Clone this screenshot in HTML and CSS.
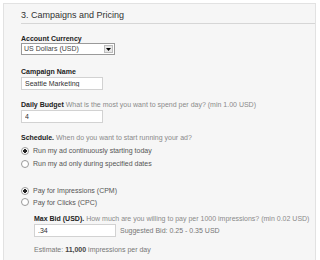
FILE: index.html
```
<!DOCTYPE html>
<html lang="en">
<head>
    <meta charset="UTF-8">
    <title>Campaigns and Pricing</title>
    <link rel="stylesheet" href="styles.css">
</head>
<body>
    <div class="panel">
        <h2 class="title">3. Campaigns and Pricing</h2>

        <div class="field first">
            <div class="label">Account Currency</div>
            <div class="select">
                <span class="select-text">US Dollars (USD)</span>
                <span class="select-btn">
                    <svg width="5" height="3" viewBox="0 0 5 3"><path d="M0 0H5L2.5 3Z" fill="#000"/></svg>
                </span>
            </div>
        </div>

        <div class="field gap-big">
            <div class="label">Campaign Name</div>
            <input class="text" type="text" value="Seattle Marketing">
        </div>

        <div class="field">
            <div class="label">Daily Budget <span class="help">What is the most you want to spend per day? (min 1.00 USD)</span></div>
            <input class="text" type="text" value="4">
        </div>

        <div class="field">
            <div class="label">Schedule. <span class="help">When do you want to start running your ad?</span></div>
            <div class="radios">
                <label class="radio"><input type="radio" name="sched" checked> Run my ad continuously starting today</label>
                <label class="radio"><input type="radio" name="sched"> Run my ad only during specified dates</label>
            </div>
        </div>

        <div class="radios pricing">
            <label class="radio tight"><input type="radio" name="pay" checked> Pay for Impressions (CPM)</label>
            <label class="radio tight"><input type="radio" name="pay"> Pay for Clicks (CPC)</label>
        </div>

        <div class="bid">
            <div class="label">Max Bid (USD). <span class="help">How much are you willing to pay per 1000 impressions? (min 0.02 USD)</span></div>
            <div class="bid-row">
                <input class="text" type="text" value=".34">
                <span class="suggest">Suggested Bid: 0.25 - 0.35 USD</span>
            </div>
            <div class="estimate">Estimate: <b>11,000</b> impressions per day</div>
        </div>
    </div>
</body>
</html>
```
FILE: styles.css
```
body {
    margin: 0;
    background: #fff;
    font-family: "Liberation Sans", Arial, sans-serif;
    font-size: 7px;
    color: #555;
}
.panel {
    margin: 3px 4px 0 3px;
    height: 257px;
    box-sizing: border-box;
    border: 1px solid #e2e2e2;
    border-bottom: none;
    background: #f6f6f6;
    padding-left: 17px;
}
.title {
    margin: 6px 0 0 0;
    padding-bottom: 2px;
    font-size: 9px;
    line-height: 11px;
    font-weight: normal;
    color: #333;
    border-bottom: 1px solid #d6d6d6;
}
.field {
    margin-top: 10px;
}
.field.gap-big {
    margin-top: 12px;
}
.label {
    font-weight: bold;
    line-height: 9px;
    color: #222;
}
.help {
    font-weight: normal;
    color: #8a8a8a;
}
.select {
    display: flex;
    width: 94px;
    height: 12px;
    box-sizing: border-box;
    border: 1px solid #9a9a9a;
    background: #fff;
}
.select-text {
    flex: 1;
    line-height: 10px;
    padding-left: 2px;
    color: #444;
}
.select-btn {
    width: 9px;
    margin: 1px;
    background: #e8e8e8;
    border: 1px solid #bdbdbd;
    box-sizing: border-box;
    display: flex;
    align-items: center;
    justify-content: center;
}
.text {
    display: block;
    width: 82px;
    height: 13px;
    box-sizing: border-box;
    border: 1px solid #d2d2d2;
    background: #fff;
    font-family: inherit;
    font-size: 7px;
    color: #333;
    padding: 0 3px;
    margin: 1px 0 0 0;
}
.radios {
    margin-top: 2px;
}
.radio {
    display: flex;
    align-items: center;
    height: 13px;
    color: #555;
}
.radio.tight {
    height: 11.5px;
}
.radio input {
    appearance: none;
    width: 8px;
    height: 8px;
    margin: 0 4px 0 0;
    border: 1px solid #9a9a9a;
    border-radius: 50%;
    background: #fff;
    box-sizing: border-box;
}
.radio input:checked {
    background: radial-gradient(circle, #222 0 1.6px, #fff 2px);
}
.pricing {
    margin-top: 15px;
}
.bid {
    padding-left: 13px;
    margin-top: 6px;
}
.bid-row {
    display: flex;
    align-items: center;
    gap: 4px;
}
.suggest {
    color: #777;
    margin-top: 1px;
}
.estimate {
    margin-top: 8px;
    line-height: 9px;
    color: #777;
}
.estimate b {
    color: #444;
}
```
